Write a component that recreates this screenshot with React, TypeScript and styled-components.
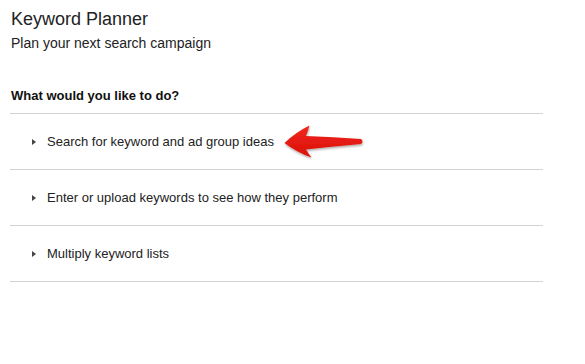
import React from "react";
import styled, { createGlobalStyle } from "styled-components";

const GlobalStyle = createGlobalStyle`
  body {
    margin: 0;
    background: #ffffff;
    font-family: "Liberation Sans", Arial, sans-serif;
    color: #222222;
  }
`;

const items = [
  { label: "Search for keyword and ad group ideas", highlighted: true },
  { label: "Enter or upload keywords to see how they perform", highlighted: false },
  { label: "Multiply keyword lists", highlighted: false },
];

const Arrow = () => (
  <Styled.ArrowSvg width="82" height="36" viewBox="0 0 82 36">
    <defs>
      <linearGradient id="arrowFill" x1="0" y1="0" x2="0" y2="1">
        <stop offset="0" stopColor="#f2281e" />
        <stop offset="1" stopColor="#d81008" />
      </linearGradient>
      <filter id="arrowShadow" x="-10%" y="-20%" width="130%" height="160%">
        <feDropShadow dx="0.5" dy="1.5" stdDeviation="1.1" floodColor="#000" floodOpacity="0.35" />
      </filter>
    </defs>
    <path
      d="M1.5 19 Q13 8 26.5 1.5 Q25 7 23 12 Q50 13 78 15 Q81 17.5 78 20 Q50 22.5 23 25.5 Q25.5 30 28.5 33.5 Q13 28 1.5 19 Z"
      fill="url(#arrowFill)"
      filter="url(#arrowShadow)"
    />
  </Styled.ArrowSvg>
);

export default function App() {
  return (
    <>
      <GlobalStyle />
      <Styled.Page>
        <Styled.Title>Keyword Planner</Styled.Title>
        <Styled.Subtitle>Plan your next search campaign</Styled.Subtitle>
        <Styled.Question>What would you like to do?</Styled.Question>
        <Styled.List>
          {items.map((item) => (
            <Styled.Row key={item.label}>
              <Styled.Caret />
              <Styled.Label>{item.label}</Styled.Label>
              {item.highlighted && <Arrow />}
            </Styled.Row>
          ))}
        </Styled.List>
      </Styled.Page>
    </>
  );
}

const Styled = {
  Page: styled.main`
    width: 533px;
    padding: 8px 0 0 10px;
  `,
  Title: styled.h1`
    margin: 0;
    padding-left: 1px;
    font-size: 18px;
    line-height: 22px;
    font-weight: normal;
    color: #222222;
  `,
  Subtitle: styled.p`
    margin: 4px 0 0;
    padding-left: 1px;
    font-size: 14px;
    line-height: 18px;
    color: #222222;
  `,
  Question: styled.h2`
    margin: 36px 0 0;
    padding-left: 1px;
    font-size: 13px;
    line-height: 16px;
    font-weight: bold;
    color: #111111;
  `,
  List: styled.ul`
    list-style: none;
    margin: 9px 0 0;
    padding: 0;
    border-top: 1px solid #d2d2d2;
  `,
  Row: styled.li`
    display: flex;
    align-items: center;
    height: 55px;
    padding-left: 22px;
    border-bottom: 1px solid #d2d2d2;
  `,
  Caret: styled.span`
    width: 0;
    height: 0;
    border-top: 3.5px solid transparent;
    border-bottom: 3.5px solid transparent;
    border-left: 4px solid #444444;
    margin-right: 11px;
  `,
  Label: styled.span`
    font-size: 13px;
    line-height: 16px;
    color: #222222;
  `,
  ArrowSvg: styled.svg`
    display: block;
    margin-left: 9px;
  `,
};
